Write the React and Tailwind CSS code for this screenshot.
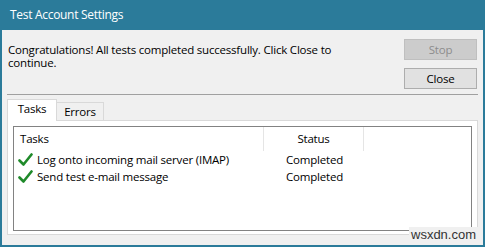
import React from "react";

function Check() {
  return (
    <svg width="15" height="14" viewBox="0 0 15 14" className="shrink-0">
      <path d="M1.5 7.5 L5.5 11.5 L13.5 1.5" fill="none" stroke="#1f8a2a" strokeWidth="2.6" strokeLinecap="round" strokeLinejoin="round" />
    </svg>
  );
}

export default function App() {
  const rows = [
    ["Log onto incoming mail server (IMAP)", "Completed"],
    ["Send test e-mail message", "Completed"],
  ];
  return (
    <div
      className="relative w-[485px] h-[247px] flex flex-col bg-[#2b7b9a] px-[2px] pb-[2px] text-[11.5px] tracking-[-0.2px] text-black"
      style={{ fontFamily: '"Open Sans", "Noto Sans", sans-serif' }}
    >
      <div className="h-[30px] shrink-0 flex items-center pl-[8px] text-white text-[12px] tracking-[-0.3px]">
        Test Account Settings
      </div>
      <div className="flex-1 bg-[#f0f0f0] px-[5px] flex flex-col">
        <div className="flex pt-[9px]">
          <div className="flex-1 pl-[1px] pt-[4px] leading-[13px]">
            <div>Congratulations! All tests completed successfully. Click Close to</div>
            <div>continue.</div>
          </div>
          <div className="flex flex-col gap-[8px] mr-[1px]">
            <div className="w-[73px] h-[21px] flex items-center justify-center bg-[#cccccc] border border-[#bfbfbf] text-[#8c8c8c]">
              Stop
            </div>
            <div className="w-[73px] h-[21px] flex items-center justify-center bg-[#e1e1e1] border border-[#adadad]">
              Close
            </div>
          </div>
        </div>
        <div className="mt-[5px] border-t border-[#a0a0a0]" />
        <div className="mt-[4px] flex items-end h-[21px] relative z-10">
          <div className="w-[50px] h-[22px] -mb-[1px] bg-[#ffffff] border border-[#d9d9d9] border-b-0 flex items-center justify-center pb-[3px]">
            Tasks
          </div>
          <div className="w-[47px] h-[18px] bg-[#f0f0f0] border border-[#d9d9d9] border-l-0 border-b-0 flex items-center justify-center">
            Errors
          </div>
        </div>
        <div className="h-[115px] bg-[#ffffff] border border-[#d9d9d9] px-[5px] pt-[5px] pb-[3px] flex">
          <div className="flex-1 bg-white border border-[#828282]">
            <div className="flex h-[24px] items-center">
              <div className="w-[250px] h-full pl-[6px] flex items-center border-r border-[#e5e5e5]">Tasks</div>
              <div className="w-[100px] h-full flex items-center justify-center border-r border-[#e5e5e5]">Status</div>
            </div>
            {rows.map(([t, s]) => (
              <div key={t} className="flex h-[17px] items-center">
                <div className="w-[250px] pl-[4px] flex items-center gap-[4px]">
                  <Check />
                  <span>{t}</span>
                </div>
                <div className="w-[101px] text-center">{s}</div>
              </div>
            ))}
          </div>
        </div>
      </div>
      <div
        className="absolute left-[409px] top-[227px] px-[2px] bg-[#f0f0f0] text-[#333333] text-[13px] tracking-normal leading-[16px]"
        style={{ fontFamily: '"Liberation Sans", Arial, sans-serif' }}
      >
        wsxdn.com
      </div>
    </div>
  );
}
